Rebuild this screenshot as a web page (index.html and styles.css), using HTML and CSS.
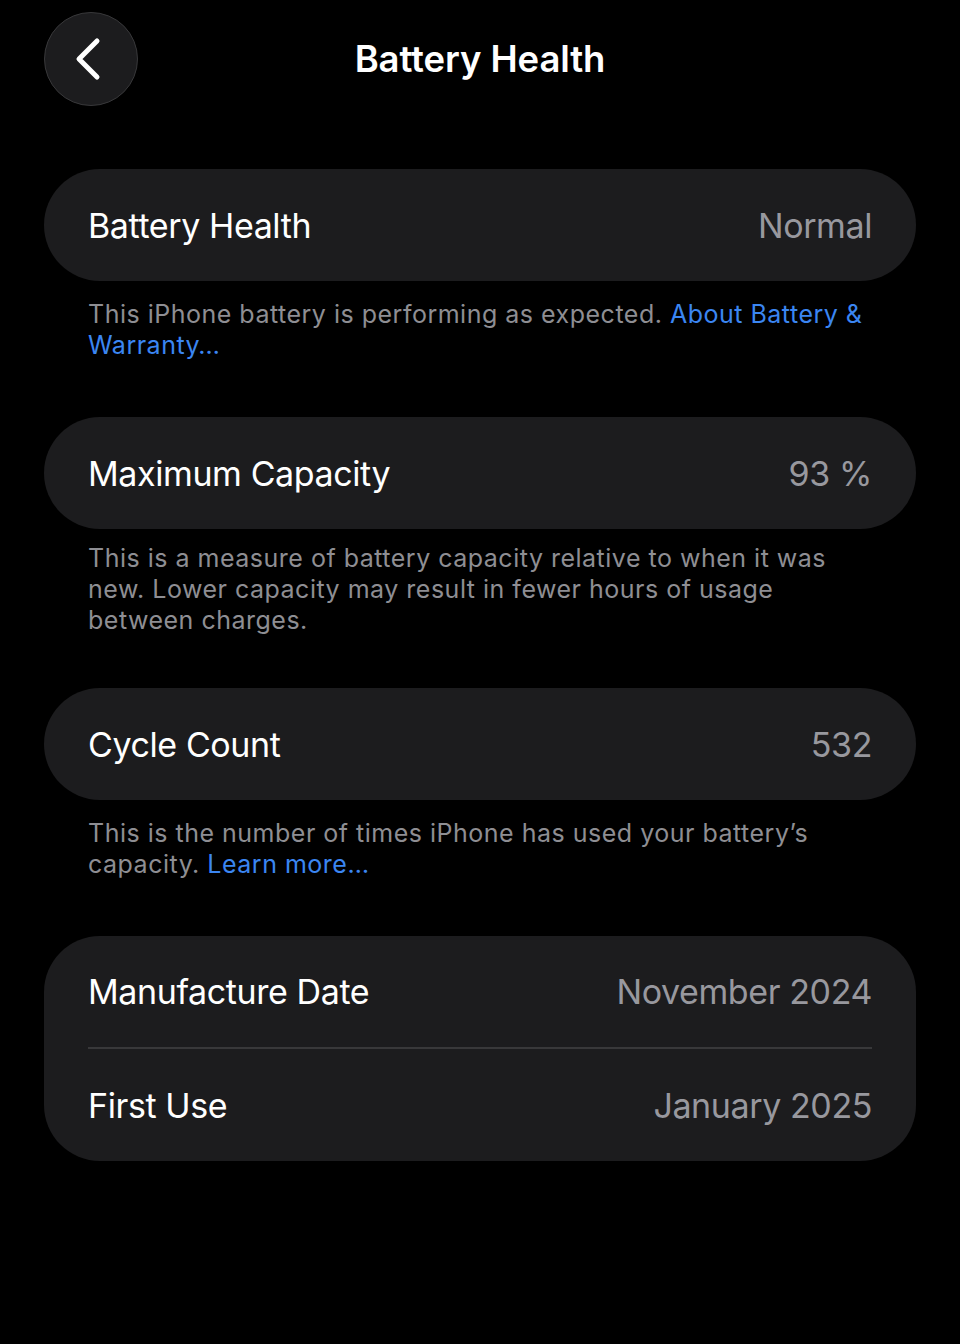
FILE: index.html
```html
<!DOCTYPE html>
<html lang="en">
<head>
    <meta charset="utf-8">
    <title>Battery Health</title>
    <link rel="stylesheet" href="styles.css">
</head>
<body>
    <div class="screen">
        <div class="nav">
            <div class="back">
                <svg width="30" height="44" viewBox="0 0 30 44">
                    <path d="M24 4 L6 22 L24 40" fill="none" stroke="#fff" stroke-width="5" stroke-linecap="round" stroke-linejoin="round" />
                </svg>
            </div>
            <h1 class="title">Battery Health</h1>
        </div>

        <div class="group">
            <div class="card">
                <div class="row"><span class="label">Battery Health</span><span class="value">Normal</span></div>
            </div>
            <p class="note">This iPhone battery is performing as expected. <a href="#">About Battery &amp; Warranty…</a></p>
        </div>

        <div class="group g2">
            <div class="card">
                <div class="row"><span class="label">Maximum Capacity</span><span class="value">93 %</span></div>
            </div>
            <p class="note">This is a measure of battery capacity relative to when it was new. Lower capacity may result in fewer hours of usage between charges.</p>
        </div>

        <div class="group">
            <div class="card">
                <div class="row"><span class="label">Cycle Count</span><span class="value">532</span></div>
            </div>
            <p class="note">This is the number of times iPhone has used your battery’s capacity. <a href="#">Learn more…</a></p>
        </div>

        <div class="group">
            <div class="card dates">
                <div class="row"><span class="label">Manufacture Date</span><span class="value">November 2024</span></div>
                <div class="line"></div>
                <div class="row"><span class="label">First Use</span><span class="value">January 2025</span></div>
            </div>
        </div>
    </div>
</body>
</html>
```

FILE: styles.css
```css
* {
    margin: 0;
    padding: 0;
    box-sizing: border-box;
}

body {
    background: #000;
    font-family: Inter, "Noto Sans", sans-serif;
    color: #fff;
}

.screen {
    width: 960px;
    height: 1344px;
    padding: 12px 44px 0;
}

.nav {
    display: flex;
    align-items: center;
    height: 94px;
    position: relative;
    margin-bottom: 63px;
}

.back {
    width: 94px;
    height: 94px;
    border-radius: 50%;
    background: #1c1c1e;
    border: 1px solid #38383a;
    display: flex;
    align-items: center;
    justify-content: center;
    padding-right: 6px;
}

.title {
    position: absolute;
    left: 0;
    right: 0;
    text-align: center;
    font-size: 36.5px;
    font-weight: 600;
    letter-spacing: -0.1px;
    pointer-events: none;
}

.group {
    margin-bottom: 56px;
}

.g2 {
    margin-bottom: 52px;
}

.card {
    background: #1c1c1e;
    border-radius: 56px;
    padding: 0 44px;
}

.row {
    display: flex;
    justify-content: space-between;
    align-items: center;
    height: 112px;
    font-size: 34px;
    letter-spacing: -0.4px;
}

.value {
    color: #98989e;
}

.line {
    height: 2px;
    background: #38383a;
}

.dates .row:first-child {
    height: 111px;
}

.note {
    padding: 18px 44px 0;
    font-size: 25px;
    line-height: 31px;
    color: #8e8e93;
    letter-spacing: 0.5px;
}

.g2 .note {
    padding-top: 14px;
}

.note a {
    color: #3b86f2;
    text-decoration: none;
}
```
